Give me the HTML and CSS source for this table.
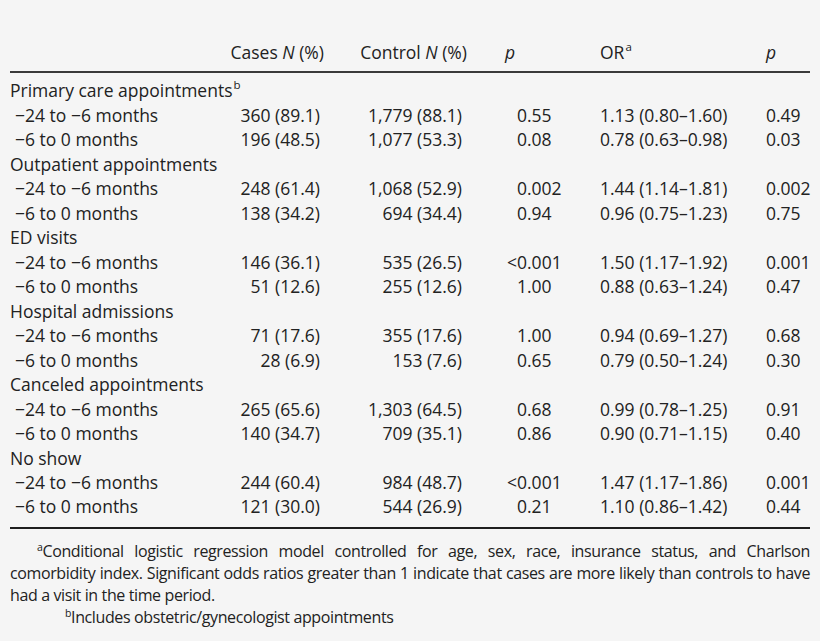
FILE: index.html
```html
<!DOCTYPE html>
<html lang="en">
<head>
<meta charset="utf-8">
<title>Table</title>
<link rel="stylesheet" href="styles.css">
</head>
<body>
<div class="page">
  <table class="data">
    <colgroup>
      <col class="c1"><col class="c2"><col class="c3"><col class="c4"><col class="c5"><col class="c6">
    </colgroup>
    <thead>
      <tr>
        <th class="h1"></th>
        <th class="h2">Cases <i>N</i> (%)</th>
        <th class="h3">Control <i>N</i> (%)</th>
        <th class="h4"><i>p</i></th>
        <th class="h5">OR<sup>a</sup></th>
        <th class="h6"><i>p</i></th>
      </tr>
    </thead>
    <tbody>
      <tr class="first"><td class="grp" colspan="6">Primary care appointments<sup>b</sup></td></tr>
      <tr><td class="sub">−24 to −6 months</td><td class="n1">360 (89.1)</td><td class="n2">1,779 (88.1)</td><td class="pv">0.55</td><td class="or">1.13 (0.80–1.60)</td><td class="p2">0.49</td></tr>
      <tr><td class="sub">−6 to 0 months</td><td class="n1">196 (48.5)</td><td class="n2">1,077 (53.3)</td><td class="pv">0.08</td><td class="or">0.78 (0.63–0.98)</td><td class="p2">0.03</td></tr>
      <tr><td class="grp" colspan="6">Outpatient appointments</td></tr>
      <tr><td class="sub">−24 to −6 months</td><td class="n1">248 (61.4)</td><td class="n2">1,068 (52.9)</td><td class="pv">0.002</td><td class="or">1.44 (1.14–1.81)</td><td class="p2">0.002</td></tr>
      <tr><td class="sub">−6 to 0 months</td><td class="n1">138 (34.2)</td><td class="n2">694 (34.4)</td><td class="pv">0.94</td><td class="or">0.96 (0.75–1.23)</td><td class="p2">0.75</td></tr>
      <tr><td class="grp" colspan="6">ED visits</td></tr>
      <tr><td class="sub">−24 to −6 months</td><td class="n1">146 (36.1)</td><td class="n2">535 (26.5)</td><td class="pv"><span class="lt">&lt;</span>0.001</td><td class="or">1.50 (1.17–1.92)</td><td class="p2">0.001</td></tr>
      <tr><td class="sub">−6 to 0 months</td><td class="n1">51 (12.6)</td><td class="n2">255 (12.6)</td><td class="pv">1.00</td><td class="or">0.88 (0.63–1.24)</td><td class="p2">0.47</td></tr>
      <tr><td class="grp" colspan="6">Hospital admissions</td></tr>
      <tr><td class="sub">−24 to −6 months</td><td class="n1">71 (17.6)</td><td class="n2">355 (17.6)</td><td class="pv">1.00</td><td class="or">0.94 (0.69–1.27)</td><td class="p2">0.68</td></tr>
      <tr><td class="sub">−6 to 0 months</td><td class="n1">28 (6.9)</td><td class="n2">153 (7.6)</td><td class="pv">0.65</td><td class="or">0.79 (0.50–1.24)</td><td class="p2">0.30</td></tr>
      <tr><td class="grp" colspan="6">Canceled appointments</td></tr>
      <tr><td class="sub">−24 to −6 months</td><td class="n1">265 (65.6)</td><td class="n2">1,303 (64.5)</td><td class="pv">0.68</td><td class="or">0.99 (0.78–1.25)</td><td class="p2">0.91</td></tr>
      <tr><td class="sub">−6 to 0 months</td><td class="n1">140 (34.7)</td><td class="n2">709 (35.1)</td><td class="pv">0.86</td><td class="or">0.90 (0.71–1.15)</td><td class="p2">0.40</td></tr>
      <tr><td class="grp" colspan="6">No show</td></tr>
      <tr><td class="sub">−24 to −6 months</td><td class="n1">244 (60.4)</td><td class="n2">984 (48.7)</td><td class="pv"><span class="lt">&lt;</span>0.001</td><td class="or">1.47 (1.17–1.86)</td><td class="p2">0.001</td></tr>
      <tr class="last"><td class="sub">−6 to 0 months</td><td class="n1">121 (30.0)</td><td class="n2">544 (26.9)</td><td class="pv">0.21</td><td class="or">1.10 (0.86–1.42)</td><td class="p2">0.44</td></tr>
    </tbody>
  </table>
  <div class="notes">
    <p class="fn fn-a"><span class="line jl ind-a"><sup>a</sup>Conditional logistic regression model controlled for age, sex, race, insurance status, and Charlson</span><span class="line jl">comorbidity index. Significant odds ratios greater than 1 indicate that cases are more likely than controls to have</span><span class="line">had a visit in the time period.</span></p>
    <p class="fn fn-b"><span class="line ind-b"><sup>b</sup>Includes obstetric/gynecologist appointments</span></p>
  </div>
</div>
</body>
</html>
```

FILE: styles.css
```css
html, body {
  margin: 0;
  padding: 0;
  background: #f5f5f5;
}

.page {
  padding: 39.5px 10px 0 10px;
  color: #222222;
  font-family: "Open Sans", "Noto Sans", sans-serif;
}

.data {
  width: 800px;
  border-collapse: collapse;
  table-layout: fixed;
  font-size: 17.5px;
}

.c1 { width: 220px; }
.c2 { width: 100px; }
.c3 { width: 140px; }
.c4 { width: 130px; }
.c5 { width: 166px; }
.c6 { width: 44px; }

.data th,
.data td {
  padding: 0;
  line-height: 24.47px;
  font-weight: 400;
  white-space: nowrap;
  vertical-align: baseline;
}

.data thead tr {
  border-bottom: 2px solid #3a3a3a;
}

.data thead th {
  padding-bottom: 7px;
}

.h2 { text-align: right; padding-right: 6px !important; }
.h3 { text-align: right; padding-right: 3px !important; }
.h4 { text-align: left; padding-left: 35px !important; }
.h5 { text-align: left; }
.h6 { text-align: left; }

.data tbody tr.first td { padding-top: 5.5px; }
.data tbody tr.last td { padding-bottom: 8px; }
.data tbody tr.last { border-bottom: 2px solid #1e1e1e; }

.grp { text-align: left; }
.sub { padding-left: 5px !important; }
.n1 { text-align: right; padding-right: 10px !important; }
.n2 { text-align: right; padding-right: 8px !important; }
.pv { text-align: left; padding-left: 47px !important; }
.or { text-align: left; }
.p2 { text-align: left; }

.lt { margin-left: -10px; }

.data sup {
  font-size: 11.5px;
  line-height: 0;
  vertical-align: 8px;
  margin-left: 1px;
}

.notes {
  width: 800px;
  margin-top: 11px;
  font-size: 16px;
  letter-spacing: -0.38px;
  line-height: 22px;
}

.fn {
  margin: 0;
}

.line {
  display: block;
  white-space: nowrap;
}

.jl {
  text-align: justify;
  text-align-last: justify;
}

.ind-a { padding-left: 27px; }
.ind-b { padding-left: 55px; }

.notes sup {
  font-size: 10.5px;
  line-height: 0;
  vertical-align: 6px;
}
```
